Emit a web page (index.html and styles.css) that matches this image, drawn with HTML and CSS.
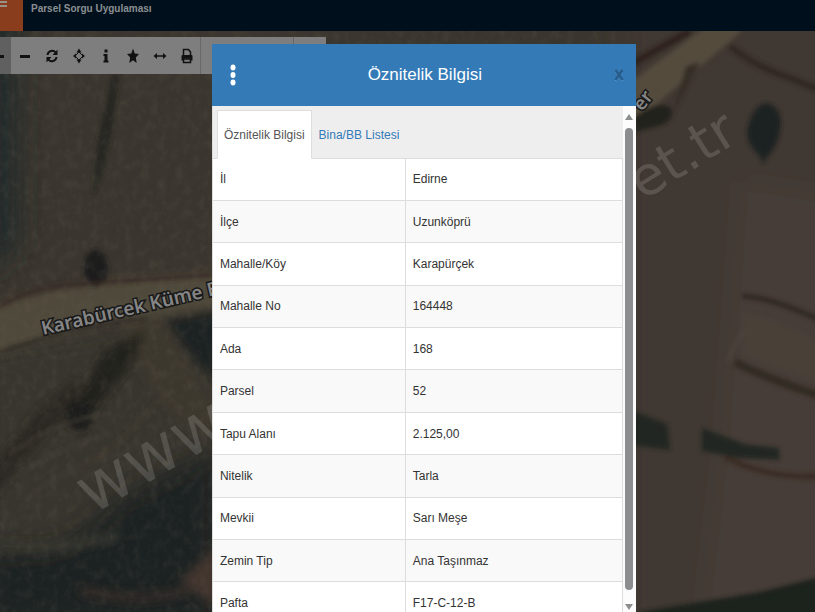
FILE: index.html
```html
<!DOCTYPE html>
<html lang="tr">
<head>
<meta charset="utf-8">
<meta name="viewport" content="width=device-width, initial-scale=1">
<title>Parsel Sorgu Uygulaması</title>
<link rel="stylesheet" href="styles.css">
</head>
<body>
<div class="app">
  <header class="topbar">
    <button class="menu-button" type="button" aria-label="Menü">
      <svg width="12" height="16" viewBox="0 0 12 16"><path d="M0 1h7v2H0zM0 5h7v2H0z" fill="#99908a"/></svg>
    </button>
    <h1 class="app-title">Parsel Sorgu Uygulaması</h1>
  </header>

  <main class="map">
    <svg class="terrain" viewBox="0 31 815 581" preserveAspectRatio="xMidYMin slice" aria-hidden="true">
      <defs>
        <filter id="soft" x="-20%" y="-20%" width="140%" height="140%"><feGaussianBlur stdDeviation="5"/></filter>
        <filter id="edge" x="-20%" y="-20%" width="140%" height="140%"><feGaussianBlur stdDeviation="2"/></filter>
        <filter id="wide" x="-30%" y="-30%" width="160%" height="160%"><feGaussianBlur stdDeviation="14"/></filter>
        <filter id="grain" x="0" y="0" width="100%" height="100%" color-interpolation-filters="sRGB">
          <feTurbulence type="fractalNoise" baseFrequency="0.12 0.1" numOctaves="4" seed="4"/>
          <feColorMatrix values="0 0 0 0 0.48  0 0 0 0 0.45  0 0 0 0 0.39  2 0 0 0 -0.85"/>
        </filter>
      </defs>
      <rect y="31" width="815" height="581" fill="#3a352e"/>
      <g filter="url(#wide)">
        <path d="M-30 0H18V250L-30 280z" fill="#242c29"/>
        <path d="M620 0H860V640H620z" fill="#403732"/>
        <path d="M740 180L860 200V640L700 620L720 450z" fill="#463e38"/>
        <path d="M-20 345L150 320L220 345V480L120 560L-20 550z" fill="#38342f"/>
        <path d="M-20 550L60 545L130 490L220 445V630H-20z" fill="#1e2424"/>
      </g>
      <g filter="url(#soft)">
        <path d="M-10 308Q60 280 230 272V304L100 324L-10 356z" fill="#50483b"/>
        <path d="M115 320L160 318L180 350L220 420L205 440L160 400z" fill="#3e382f"/>
        <path d="M105 350L145 330L135 360L102 400L82 432L62 420L80 395z" fill="#22241f"/>
        <path d="M165 320L225 310V385L195 362z" fill="#1f2420"/>
        <path d="M-10 470L40 410L75 380L82 395L40 440L-10 500z" fill="#292824"/>
        <path d="M-5 545Q60 552 120 535" fill="none" stroke="#3e3d34" stroke-width="6"/>
        <path d="M180 580L225 540V612L195 592z" fill="#43362e"/>
        <path d="M80 590Q140 605 190 590" fill="none" stroke="#342c26" stroke-width="8"/>
      </g>
      <g filter="url(#edge)">
        <path d="M112 75L119 75L112 130L102 175L93 195L97 145z" fill="#252721"/>
        <ellipse cx="96" cy="268" rx="12" ry="18" fill="#1a1c1e"/>
        <ellipse cx="80" cy="415" rx="12" ry="14" fill="#1a1c1a"/>
        <path d="M0 307Q30 286 80 284L212 275" fill="none" stroke="#342720" stroke-width="3"/>
        <path d="M0 352L70 330L145 318" fill="none" stroke="#292720" stroke-width="3"/>
        <path d="M620 90L715 20L742 31L640 118L610 140z" fill="#554b3e"/>
        <path d="M600 82L690 31" fill="none" stroke="#2d211b" stroke-width="7"/>
        <path d="M730 46Q755 67 790 78L820 90" fill="none" stroke="#2e2520" stroke-width="6"/>
        <path d="M686 66L700 62L678 105L670 120z" fill="#352e26"/>
        <path d="M633 118Q655 100 670 107Q676 118 662 125L636 132z" fill="#24221f"/>
        <path d="M766 103Q779 106 781 121Q780 145 766 158L763 164L760 156Q744 142 748 127Q753 106 766 103z" fill="#1d2021"/>
        <path d="M742 296Q770 297 820 320" fill="none" stroke="#2e2521" stroke-width="5"/>
        <path d="M742 312Q780 320 820 343V383L745 356z" fill="#494039"/>
        <path d="M735 362Q760 376 820 396" fill="none" stroke="#302a24" stroke-width="8"/>
        <path d="M746 330Q733 342 728 362" fill="none" stroke="#514840" stroke-width="2"/>
        <path d="M630 410L667 424L670 450L630 445z" fill="#222722"/>
        <path d="M702 428L745 444L779 448L780 460L738 458L702 451z" fill="#242821"/>
        <path d="M725 457Q770 480 820 476" fill="none" stroke="#382a23" stroke-width="5"/>
        <path d="M640 612L700 602L760 592L820 577V620H640z" fill="#1c211e"/>
        <path d="M10 455Q45 425 103 414M15 478Q60 446 105 436M25 500Q65 465 125 453" fill="none" stroke="#423d34" stroke-width="2"/>
        <path d="M158 400Q130 440 80 468" fill="none" stroke="#40392e" stroke-width="3"/>
      </g>
      <rect y="31" width="620" height="581" filter="url(#grain)" opacity=".15"/>
      <g class="road-label">
        <text transform="translate(43 335) rotate(-13)">Karabürcek Küme Evler</text>
        <text transform="translate(642 112) rotate(-52)">er</text>
      </g>
    </svg>

    <div class="toolbar" role="toolbar" aria-label="Harita araçları">
      <button class="tool tool-active" type="button" aria-label="Yakınlaştır"><svg viewBox="0 0 16 16"><path d="M0 7h4v3H0z"/></svg></button>
      <button class="tool" type="button" aria-label="Uzaklaştır"><svg viewBox="0 0 16 16"><path d="M3 7h10v3H3z"/></svg></button>
      <button class="tool" type="button" aria-label="Yenile"><svg viewBox="0 0 16 16"><path d="M3.500 7C4 2.500 9.500 1.500 11.500 4.500M12.500 9C12 13.500 6.500 14.500 4.500 11.500" fill="none" stroke="#111" stroke-width="2"/><path d="M13.500 1.500V7H8.500zM2.500 14.500V9H7.500z"/></svg></button>
      <button class="tool" type="button" aria-label="Konum"><svg viewBox="0 0 16 16"><path d="M8 4L12 8L8 12L4 8z" fill="none" stroke="#111" stroke-width="1"/><path d="M8 .5L10.500 4.500H5.500zM8 15.500L5.500 11.500H10.500zM2 8L5 5.500V10.500zM14 8L11 10.500V5.500z"/></svg></button>
      <button class="tool" type="button" aria-label="Bilgi"><svg viewBox="0 0 16 16"><path d="M6.500 1.500h3v3h-3zM5.500 6h4v6.500h1v2H5.500v-2h1V8h-1z"/></svg></button>
      <button class="tool" type="button" aria-label="Favoriler"><svg viewBox="0 0 16 16"><path d="M8 .5L9.700 5.500L14 6L10.800 9.500L11.700 15L8 12.300L4.300 15L5.200 9.500L2 6L6.300 5.500z"/></svg></button>
      <button class="tool" type="button" aria-label="Ölçüm"><svg viewBox="0 0 16 16"><path d="M1.500 8L5 5V7.200H11V5L14.500 8L11 11V8.800H5V11z"/></svg></button>
      <button class="tool" type="button" aria-label="Yazdır"><svg viewBox="0 0 16 16"><path d="M4.500 7.500V1.500H9.500L11.500 4V7.500M4.500 11H11.500V14.500H4.500z" fill="none" stroke="#111" stroke-width="1.500"/><path d="M2.500 8Q2.500 7 3.500 7H12.500Q13.500 7 13.500 8V12.500H11.500V10.500H4.500V12.500H2.500z"/></svg></button>
      <span class="tool-space"></span>
    </div>
  </main>

  <section class="dialog" role="dialog" aria-labelledby="dialog-title">
    <header class="dialog-head">
      <button class="more" type="button" aria-label="Seçenekler"><svg width="6" height="22" viewBox="0 0 6 22" fill="#fff"><ellipse cx="3" cy="3.500" rx="2.500" ry="3"/><ellipse cx="3" cy="11" rx="2.500" ry="3"/><ellipse cx="3" cy="18.500" rx="2.500" ry="3"/></svg></button>
      <h2 id="dialog-title">Öznitelik Bilgisi</h2>
      <button class="close" type="button" aria-label="Kapat"><svg width="10" height="14" viewBox="0 0 10 14"><path d="M1.500 3L8.500 13M8.500 3L1.500 13" stroke="#5d9bd0" stroke-width="2"/><path d="M1.500 2L8.500 12M8.500 2L1.500 12" stroke="#275c8a" stroke-width="2.500"/></svg></button>
    </header>
    <div class="dialog-body">
      <div class="content">
        <nav class="tabs">
          <a class="tab tab-current" href="#oznitelik" aria-current="page">Öznitelik Bilgisi</a>
          <a class="tab" href="#bina">Bina/BB Listesi</a>
        </nav>
        <table class="attributes" id="oznitelik">
          <tbody>
            <tr><th scope="row">İl</th><td>Edirne</td></tr>
            <tr><th scope="row">İlçe</th><td>Uzunköprü</td></tr>
            <tr><th scope="row">Mahalle/Köy</th><td>Karapürçek</td></tr>
            <tr><th scope="row">Mahalle No</th><td>164448</td></tr>
            <tr><th scope="row">Ada</th><td>168</td></tr>
            <tr><th scope="row">Parsel</th><td>52</td></tr>
            <tr><th scope="row">Tapu Alanı</th><td>2.125,00</td></tr>
            <tr><th scope="row">Nitelik</th><td>Tarla</td></tr>
            <tr><th scope="row">Mevkii</th><td>Sarı Meşe</td></tr>
            <tr><th scope="row">Zemin Tip</th><td>Ana Taşınmaz</td></tr>
            <tr><th scope="row">Pafta</th><td>F17-C-12-B</td></tr>
          </tbody>
        </table>
      </div>
      <div class="scrollbar" aria-hidden="true">
        <svg width="8" height="6" viewBox="0 0 8 6"><path d="M4 0L8 6H0z"/></svg>
        <span class="thumb"></span>
        <svg width="8" height="6" viewBox="0 0 8 6"><path d="M0 0H8L4 6z"/></svg>
      </div>
    </div>
  </section>

  <svg class="watermark" viewBox="0 0 815 612" preserveAspectRatio="xMidYMin slice" aria-hidden="true">
    <text class="mark-start" transform="translate(92 515) rotate(-30)">www.</text>
    <text transform="translate(643 201) rotate(-32)">et.tr</text>
  </svg>
</div>
</body>
</html>
```
FILE: styles.css
```css
* { box-sizing: border-box; }

body {
  margin: 0;
  color: #333;
  font: 12px/18px "Liberation Sans", Arial, sans-serif;
}

button {
  padding: 0;
  border: 0;
  background: none;
}

.app {
  position: relative;
  display: flex;
  flex-direction: column;
  height: 100vh;
  overflow: hidden;
}

.topbar {
  display: flex;
  flex: none;
  height: 31px;
  background: #000f1c;
}

.menu-button {
  display: flex;
  width: 23px;
  background: #8a3d1c;
}

.app-title {
  margin: 0 8px;
  color: #8b8f92;
  font-size: 10px;
  line-height: 18px;
}

.map {
  position: relative;
  flex: 1;
  min-height: 0;
  padding-top: 6px;
}

.terrain {
  position: absolute;
  inset: 0;
  width: 100%;
  height: 100%;
}

.road-label text {
  fill: #858585;
  stroke: #191919;
  stroke-width: 3px;
  paint-order: stroke;
  font: 600 19px "Noto Sans", sans-serif;
}

.toolbar {
  position: relative;
  display: flex;
  width: 40%;
  height: 37px;
  background: #7e7e7e;
}

.tool {
  display: flex;
  flex: 0 1 27px;
  align-items: center;
  justify-content: center;
}

.tool svg {
  width: 16px;
  height: 16px;
  fill: #111;
}

.tool-active {
  flex: none;
  justify-content: flex-start;
  width: 11px;
  overflow: hidden;
  background: #606060;
}

.tool-active svg { flex: none; }

.tool-space {
  width: 94px;
  border: solid #686868;
  border-width: 0 1px;
}

.dialog {
  position: absolute;
  top: 44px;
  bottom: 0;
  left: 26%;
  display: flex;
  flex-direction: column;
  width: 52%;
  background: #fff;
}

.dialog-head {
  display: flex;
  flex: none;
  align-items: center;
  justify-content: space-between;
  height: 62px;
  padding: 0 12px 0 18px;
  background: #337ab7;
}

.dialog-head h2 {
  margin: 0;
  color: #fff;
  font-size: 17px;
  font-weight: 400;
  line-height: 24px;
}

.more,
.close { display: flex; }

.dialog-body {
  display: flex;
  flex: 1;
  min-height: 0;
}

.content {
  flex: 1;
  overflow: hidden;
  border-left: 1px solid #ddd;
}

.tabs {
  display: flex;
  height: 53px;
  padding: 4px 4px 0;
  border-bottom: 1px solid #ddd;
  background: #eee;
}

.tab {
  display: flex;
  align-items: center;
  height: 49px;
  padding: 0 6px;
  border: 1px solid transparent;
  color: #337ab7;
  text-decoration: none;
}

.tab-current {
  border-color: #ddd;
  border-bottom-color: #fff;
  background: #fff;
  color: #555;
}

.attributes {
  width: 100%;
  height: 466px;
  border-collapse: collapse;
  table-layout: fixed;
}

.attributes th,
.attributes td {
  padding: 0 7px;
  border: 1px solid #ddd;
  border-width: 0 1px 1px 0;
  font-weight: 400;
  text-align: left;
}

.attributes th { width: 47%; }

.attributes tr:nth-child(even) { background: #f9f9f9; }

.scrollbar {
  display: flex;
  flex: none;
  flex-direction: column;
  align-items: center;
  gap: 8px;
  width: 13px;
  padding: 8px 0 2px;
  background: #fcfcfc;
}

.scrollbar svg {
  flex: none;
  fill: #8b8d8e;
}

.thumb {
  flex: 1;
  width: 8px;
  margin-bottom: 6px;
  border-radius: 4px;
  background: #8b8d8e;
}

.watermark {
  position: absolute;
  inset: 0;
  width: 100%;
  height: 100%;
  pointer-events: none;
}

.watermark text {
  fill: #fff;
  fill-opacity: .14;
  font: 54px "DejaVu Sans", sans-serif;
}

.watermark .mark-start { font-size: 66px; }
```
